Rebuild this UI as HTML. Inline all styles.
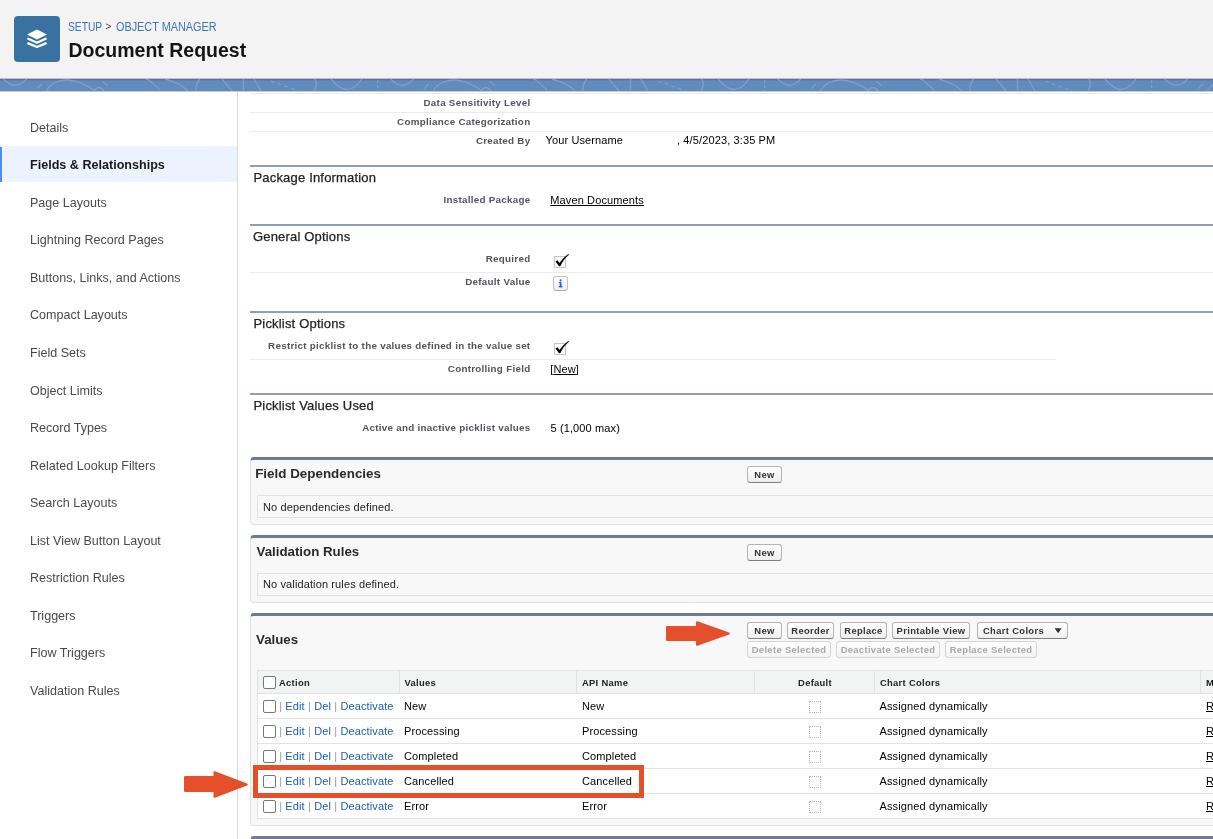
<!DOCTYPE html>
<html><head><meta charset="utf-8"><title>Document Request</title>
<style>
html,body{margin:0;padding:0;}
body{width:1213px;height:839px;overflow:hidden;position:relative;background:#fff;font-family:"Liberation Sans", sans-serif;}
.t{position:absolute;white-space:nowrap;}
</style></head><body>
<div id="root" style="position:absolute;left:0;top:0;width:1213px;height:839px;will-change:transform;">
<div style="position:absolute;left:0px;top:0px;width:1213px;height:78px;background:#f3f3f3;"></div>
<div style="position:absolute;left:0px;top:78px;width:1213px;height:1px;background:#c6c1bb;"></div>
<svg style="position:absolute;left:0;top:79px" width="1213" height="12" viewBox="0 0 1213 12">
<defs><g id="bp" fill="none" stroke="#7d9fcb" stroke-width="1.3">
<path d="M3.7,0 Q15.5,12.5 26.6,0"/><path d="M37,9.4 L42,5"/>
<path d="M46.4,12 C50,5 58,1 67,1 C76,1 84,4 95.2,12"/><path d="M94,12 Q99,5 104,12"/>
<path d="M102.6,2.6 L107.6,6.6"/><path d="M146,0 L150,1.5"/><path d="M150,2 L160,11"/>
<path d="M165,0 Q180,4 188,12"/><path d="M199.5,0 Q195,6 196,12"/><path d="M222,0 L232,12"/>
<path d="M243.5,0 L243.5,12"/><path d="M254,0 L261,12"/><path d="M271,2 L298.5,12" stroke-dasharray="4,3"/>
<path d="M315,0 Q318,6 314,12"/><path d="M331,0 Q348,21 362,0"/><path d="M377.7,1 L377.7,12" stroke-dasharray="3,2"/>
</g></defs>
<rect width="1213" height="12" fill="#5f8bbf"/>
<rect width="1213" height="1" fill="#4d77ab"/><rect y="1" width="1213" height="1" fill="#5580b5" opacity="0.6"/>
<use href="#bp" x="0"/><use href="#bp" x="387"/><use href="#bp" x="774"/><use href="#bp" x="1161"/>
</svg>
<div style="position:absolute;left:0px;top:91px;width:1213px;height:1px;background:#cdc8c2;"></div>
<svg style="position:absolute;left:14px;top:16px" width="46" height="46" viewBox="14 16 46 46">
<rect x="14" y="16" width="46" height="46" rx="4" fill="#3971a0"/>
<polygon points="27,34.5 37,29.5 47,34.5 37,39.5" fill="#fff"/>
<polyline points="28.3,38.8 37,42.7 45.7,38.8" fill="none" stroke="#fff" stroke-width="2.3" stroke-linecap="round" stroke-linejoin="round"/>
<polyline points="28.3,43.4 37,47.0 45.7,43.4" fill="none" stroke="#fff" stroke-width="2.3" stroke-linecap="round" stroke-linejoin="round"/>
</svg>
<div class="t" style="left:67.5px;top:20.84px;font-size:12px;line-height:12px;font-weight:normal;color:#3d77b4;transform:scaleX(0.855);transform-origin:0 0;">SETUP</div>
<div class="t" style="left:105.5px;top:22.04px;font-size:10px;line-height:10px;font-weight:normal;color:#3e3e3c;">&gt;</div>
<div class="t" style="left:115.8px;top:20.84px;font-size:12px;line-height:12px;font-weight:normal;color:#3d77b4;transform:scaleX(0.905);transform-origin:0 0;">OBJECT MANAGER</div>
<div class="t" style="left:68.5px;top:41.29px;font-size:19.5px;line-height:19.5px;font-weight:bold;color:#141414;">Document Request</div>
<div style="position:absolute;left:237px;top:91px;width:1px;height:748px;background:#dddbda;"></div>
<div style="position:absolute;left:0px;top:146px;width:237px;height:36px;background:#edf3fe;"></div>
<div style="position:absolute;left:0px;top:147px;width:2px;height:35px;background:#4c8ef5;"></div>
<div class="t" style="left:30px;top:120.83px;font-size:13.2px;line-height:13.2px;font-weight:normal;color:#4a4a48;transform:scaleX(0.951);transform-origin:0 0;">Details</div>
<div class="t" style="left:30px;top:158.32px;font-size:13.6px;line-height:13.6px;font-weight:bold;color:#181818;transform:scaleX(0.925);transform-origin:0 0;">Fields &amp; Relationships</div>
<div class="t" style="left:30px;top:195.89px;font-size:13.2px;line-height:13.2px;font-weight:normal;color:#4a4a48;transform:scaleX(0.951);transform-origin:0 0;">Page Layouts</div>
<div class="t" style="left:30px;top:233.42px;font-size:13.2px;line-height:13.2px;font-weight:normal;color:#4a4a48;transform:scaleX(0.951);transform-origin:0 0;">Lightning Record Pages</div>
<div class="t" style="left:30px;top:270.95px;font-size:13.2px;line-height:13.2px;font-weight:normal;color:#4a4a48;transform:scaleX(0.951);transform-origin:0 0;">Buttons, Links, and Actions</div>
<div class="t" style="left:30px;top:308.48px;font-size:13.2px;line-height:13.2px;font-weight:normal;color:#4a4a48;transform:scaleX(0.951);transform-origin:0 0;">Compact Layouts</div>
<div class="t" style="left:30px;top:346.01px;font-size:13.2px;line-height:13.2px;font-weight:normal;color:#4a4a48;transform:scaleX(0.951);transform-origin:0 0;">Field Sets</div>
<div class="t" style="left:30px;top:383.54px;font-size:13.2px;line-height:13.2px;font-weight:normal;color:#4a4a48;transform:scaleX(0.951);transform-origin:0 0;">Object Limits</div>
<div class="t" style="left:30px;top:421.07px;font-size:13.2px;line-height:13.2px;font-weight:normal;color:#4a4a48;transform:scaleX(0.951);transform-origin:0 0;">Record Types</div>
<div class="t" style="left:30px;top:458.60px;font-size:13.2px;line-height:13.2px;font-weight:normal;color:#4a4a48;transform:scaleX(0.951);transform-origin:0 0;">Related Lookup Filters</div>
<div class="t" style="left:30px;top:496.13px;font-size:13.2px;line-height:13.2px;font-weight:normal;color:#4a4a48;transform:scaleX(0.951);transform-origin:0 0;">Search Layouts</div>
<div class="t" style="left:30px;top:533.66px;font-size:13.2px;line-height:13.2px;font-weight:normal;color:#4a4a48;transform:scaleX(0.951);transform-origin:0 0;">List View Button Layout</div>
<div class="t" style="left:30px;top:571.19px;font-size:13.2px;line-height:13.2px;font-weight:normal;color:#4a4a48;transform:scaleX(0.951);transform-origin:0 0;">Restriction Rules</div>
<div class="t" style="left:30px;top:608.72px;font-size:13.2px;line-height:13.2px;font-weight:normal;color:#4a4a48;transform:scaleX(0.951);transform-origin:0 0;">Triggers</div>
<div class="t" style="left:30px;top:646.25px;font-size:13.2px;line-height:13.2px;font-weight:normal;color:#4a4a48;transform:scaleX(0.951);transform-origin:0 0;">Flow Triggers</div>
<div class="t" style="left:30px;top:683.78px;font-size:13.2px;line-height:13.2px;font-weight:normal;color:#4a4a48;transform:scaleX(0.951);transform-origin:0 0;">Validation Rules</div>
<div style="position:absolute;left:250px;top:93px;width:963px;height:1px;background:#ececec;"></div>
<div style="position:absolute;left:250px;top:112px;width:963px;height:1px;background:#ececec;"></div>
<div style="position:absolute;left:250px;top:131px;width:963px;height:1px;background:#ececec;"></div>
<div class="t" style="right:682.6px;top:98.00px;font-size:9.8px;line-height:9.8px;font-weight:bold;color:#53535f;letter-spacing:0.28px;">Data Sensitivity Level</div>
<div class="t" style="right:682.6px;top:117.00px;font-size:9.8px;line-height:9.8px;font-weight:bold;color:#53535f;letter-spacing:0.28px;">Compliance Categorization</div>
<div class="t" style="right:682.6px;top:136.00px;font-size:9.8px;line-height:9.8px;font-weight:bold;color:#53535f;letter-spacing:0.28px;">Created By</div>
<div class="t" style="left:545.5px;top:134.69px;font-size:11px;line-height:11px;font-weight:normal;color:#000;letter-spacing:0.12px;">Your Username</div>
<div class="t" style="left:677px;top:134.69px;font-size:11px;line-height:11px;font-weight:normal;color:#000;letter-spacing:0.12px;">, 4/5/2023, 3:35 PM</div>
<div style="position:absolute;left:250px;top:165px;width:963px;height:2px;background:#8e9dbe;"></div>
<div class="t" style="left:253.5px;top:171.00px;font-size:13px;line-height:13px;font-weight:normal;color:#222;letter-spacing:0.18px;-webkit-text-stroke:0.25px #222;">Package Information</div>
<div class="t" style="right:682.6px;top:195.00px;font-size:9.8px;line-height:9.8px;font-weight:bold;color:#53535f;letter-spacing:0.28px;">Installed Package</div>
<div class="t" style="left:550.3px;top:195.39px;font-size:11px;line-height:11px;font-weight:normal;color:#000;text-decoration:underline;letter-spacing:0.12px;">Maven Documents</div>
<div style="position:absolute;left:250px;top:224px;width:963px;height:2px;background:#8e9dbe;"></div>
<div class="t" style="left:253px;top:229.60px;font-size:13px;line-height:13px;font-weight:normal;color:#222;letter-spacing:0.18px;-webkit-text-stroke:0.25px #222;">General Options</div>
<div class="t" style="right:682.6px;top:254.00px;font-size:9.8px;line-height:9.8px;font-weight:bold;color:#53535f;letter-spacing:0.28px;">Required</div>
<div style="position:absolute;left:250px;top:272px;width:963px;height:1px;background:#ececec;"></div>
<div class="t" style="right:682.6px;top:277.00px;font-size:9.8px;line-height:9.8px;font-weight:bold;color:#53535f;letter-spacing:0.28px;">Default Value</div>
<div style="position:absolute;left:250px;top:311px;width:963px;height:2px;background:#8e9dbe;"></div>
<div class="t" style="left:253.5px;top:317.00px;font-size:13px;line-height:13px;font-weight:normal;color:#222;letter-spacing:0.18px;-webkit-text-stroke:0.25px #222;">Picklist Options</div>
<div class="t" style="right:682.6px;top:341.00px;font-size:9.8px;line-height:9.8px;font-weight:bold;color:#53535f;letter-spacing:0.28px;">Restrict picklist to the values defined in the value set</div>
<div style="position:absolute;left:250px;top:359px;width:806px;height:1px;background:#ececec;"></div>
<div class="t" style="right:682.6px;top:364.00px;font-size:9.8px;line-height:9.8px;font-weight:bold;color:#53535f;letter-spacing:0.28px;">Controlling Field</div>
<div class="t" style="left:550.3px;top:363.59px;font-size:11px;line-height:11px;font-weight:normal;color:#000;letter-spacing:0.12px;">[<u>New</u>]</div>
<div style="position:absolute;left:250px;top:393px;width:963px;height:2px;background:#8e9dbe;"></div>
<div class="t" style="left:253.5px;top:399.00px;font-size:13px;line-height:13px;font-weight:normal;color:#222;letter-spacing:0.18px;-webkit-text-stroke:0.25px #222;">Picklist Values Used</div>
<div class="t" style="right:682.6px;top:423.00px;font-size:9.8px;line-height:9.8px;font-weight:bold;color:#53535f;letter-spacing:0.28px;">Active and inactive picklist values</div>
<div class="t" style="left:550.5px;top:423.09px;font-size:11px;line-height:11px;font-weight:normal;color:#000;letter-spacing:0.12px;">5 (1,000 max)</div>
<svg style="position:absolute;left:554px;top:256px" width="12" height="12"><rect x="0.5" y="0.5" width="11" height="11" fill="none" stroke="#8a8a8a" stroke-width="1" stroke-dasharray="1,1"/></svg>
<svg style="position:absolute;left:0;top:0;overflow:visible" width="1" height="1">
<g transform="translate(0,0)"><path d="M555.6,261.4 L557.3,260.3 L559.5,263.0 C562,259.5 565,256.2 568.4,253.9 L569.0,254.6 C565.6,257.6 562.6,261.4 560.4,266.0 L559.0,266.2 Z" fill="#000" stroke="#000" stroke-width="0.1" stroke-linejoin="round"/></g></svg>
<svg style="position:absolute;left:554px;top:343px" width="12" height="12"><rect x="0.5" y="0.5" width="11" height="11" fill="none" stroke="#8a8a8a" stroke-width="1" stroke-dasharray="1,1"/></svg>
<svg style="position:absolute;left:0;top:0;overflow:visible" width="1" height="1">
<g transform="translate(0,87)"><path d="M555.6,261.4 L557.3,260.3 L559.5,263.0 C562,259.5 565,256.2 568.4,253.9 L569.0,254.6 C565.6,257.6 562.6,261.4 560.4,266.0 L559.0,266.2 Z" fill="#000" stroke="#000" stroke-width="0.1" stroke-linejoin="round"/></g></svg>
<div style="position:absolute;left:553px;top:276px;width:15px;height:15px;box-sizing:border-box;border:1px solid #c3c3c3;border-bottom-color:#a9a9a9;border-radius:3px;background:linear-gradient(#fff,#eceef2);"></div>
<svg style="position:absolute;left:0;top:0;overflow:visible" width="1" height="1"><g fill="#2062d8">
<circle cx="560.6" cy="280.4" r="1.05"/><rect x="559.7" y="282.1" width="1.8" height="5.2"/><rect x="558.7" y="286.1" width="3.8" height="1.2"/><rect x="558.8" y="282.1" width="1.5" height="1"/></g></svg>
<div style="position:absolute;left:250px;top:457px;width:973px;height:68px;box-sizing:border-box;background:#f8f8f8;border:1px solid #e0e3e5;border-top:3px solid #6f7a97;border-radius:4px;"></div>
<div class="t" style="left:255.2px;top:467.26px;font-size:13.4px;line-height:13.4px;font-weight:bold;color:#2a2a2a;">Field Dependencies</div>
<div style="position:absolute;left:747px;top:466px;width:35px;height:17px;box-sizing:border-box;border:1px solid #b5b5b5;border-bottom-color:#7f7f7f;border-radius:3px;background:linear-gradient(#fff,#eeeeee);"></div>
<div class="t" style="left:564.5px;width:400px;text-align:center;top:470.34px;font-size:9.4px;line-height:9.4px;font-weight:bold;color:#333;letter-spacing:0.35px;">New</div>
<div style="position:absolute;left:257px;top:495px;width:966px;height:23px;box-sizing:border-box;border:1px solid #e0e3e5;background:#f8f8f8;"></div>
<div class="t" style="left:263px;top:501.69px;font-size:11px;line-height:11px;font-weight:normal;color:#222;letter-spacing:0.12px;">No dependencies defined.</div>
<div style="position:absolute;left:250px;top:535px;width:973px;height:68px;box-sizing:border-box;background:#f8f8f8;border:1px solid #e0e3e5;border-top:3px solid #6f7a97;border-radius:4px;"></div>
<div class="t" style="left:256.5px;top:545.44px;font-size:13.3px;line-height:13.3px;font-weight:bold;color:#2a2a2a;">Validation Rules</div>
<div style="position:absolute;left:747px;top:544px;width:35px;height:17px;box-sizing:border-box;border:1px solid #b5b5b5;border-bottom-color:#7f7f7f;border-radius:3px;background:linear-gradient(#fff,#eeeeee);"></div>
<div class="t" style="left:564.5px;width:400px;text-align:center;top:548.34px;font-size:9.4px;line-height:9.4px;font-weight:bold;color:#333;letter-spacing:0.35px;">New</div>
<div style="position:absolute;left:257px;top:573px;width:966px;height:23px;box-sizing:border-box;border:1px solid #e0e3e5;background:#f8f8f8;"></div>
<div class="t" style="left:263px;top:579.49px;font-size:11px;line-height:11px;font-weight:normal;color:#222;letter-spacing:0.12px;">No validation rules defined.</div>
<div style="position:absolute;left:250px;top:613px;width:973px;height:213px;box-sizing:border-box;background:#f8f8f8;border:1px solid #e0e3e5;border-top:3px solid #6f7a97;border-radius:4px;"></div>
<div class="t" style="left:256px;top:632.74px;font-size:13.3px;line-height:13.3px;font-weight:bold;color:#2a2a2a;">Values</div>
<div style="position:absolute;left:747px;top:622px;width:35px;height:17px;box-sizing:border-box;border:1px solid #b5b5b5;border-bottom-color:#7f7f7f;border-radius:3px;background:linear-gradient(#fff,#eeeeee);"></div>
<div class="t" style="left:564.5px;width:400px;text-align:center;top:626.34px;font-size:9.4px;line-height:9.4px;font-weight:bold;color:#333;letter-spacing:0.35px;">New</div>
<div style="position:absolute;left:787px;top:622px;width:47px;height:17px;box-sizing:border-box;border:1px solid #b5b5b5;border-bottom-color:#7f7f7f;border-radius:3px;background:linear-gradient(#fff,#eeeeee);"></div>
<div class="t" style="left:610.5px;width:400px;text-align:center;top:626.34px;font-size:9.4px;line-height:9.4px;font-weight:bold;color:#333;letter-spacing:0.35px;">Reorder</div>
<div style="position:absolute;left:840px;top:622px;width:47px;height:17px;box-sizing:border-box;border:1px solid #b5b5b5;border-bottom-color:#7f7f7f;border-radius:3px;background:linear-gradient(#fff,#eeeeee);"></div>
<div class="t" style="left:663.5px;width:400px;text-align:center;top:626.34px;font-size:9.4px;line-height:9.4px;font-weight:bold;color:#333;letter-spacing:0.35px;">Replace</div>
<div style="position:absolute;left:892px;top:622px;width:78px;height:17px;box-sizing:border-box;border:1px solid #b5b5b5;border-bottom-color:#7f7f7f;border-radius:3px;background:linear-gradient(#fff,#eeeeee);"></div>
<div class="t" style="left:731.0px;width:400px;text-align:center;top:626.34px;font-size:9.4px;line-height:9.4px;font-weight:bold;color:#333;letter-spacing:0.35px;">Printable View</div>
<div style="position:absolute;left:977px;top:622px;width:91px;height:17px;box-sizing:border-box;border:1px solid #b5b5b5;border-bottom-color:#7f7f7f;border-radius:3px;background:linear-gradient(#fff,#eeeeee);"></div>
<div class="t" style="left:822.5px;width:400px;text-align:center;top:626.34px;font-size:9.4px;line-height:9.4px;font-weight:bold;color:#333;letter-spacing:0.35px;"></div>
<div class="t" style="left:983px;top:626.34px;font-size:9.4px;line-height:9.4px;font-weight:bold;color:#333;letter-spacing:0.35px;">Chart Colors</div>
<svg style="position:absolute;left:0;top:0;overflow:visible" width="1" height="1"><polygon points="1054.6,628.2 1061.6,628.2 1058.1,633.2" fill="#333"/></svg>
<div style="position:absolute;left:747px;top:641px;width:84px;height:17px;box-sizing:border-box;border:1px solid #d4d4d4;border-bottom-color:#d4d4d4;border-radius:3px;background:linear-gradient(#fdfdfd,#f4f4f4);"></div>
<div class="t" style="left:589.0px;width:400px;text-align:center;top:645.34px;font-size:9.4px;line-height:9.4px;font-weight:bold;color:#a8a8a8;letter-spacing:0.35px;">Delete Selected</div>
<div style="position:absolute;left:836px;top:641px;width:104px;height:17px;box-sizing:border-box;border:1px solid #d4d4d4;border-bottom-color:#d4d4d4;border-radius:3px;background:linear-gradient(#fdfdfd,#f4f4f4);"></div>
<div class="t" style="left:688.0px;width:400px;text-align:center;top:645.34px;font-size:9.4px;line-height:9.4px;font-weight:bold;color:#a8a8a8;letter-spacing:0.35px;">Deactivate Selected</div>
<div style="position:absolute;left:945px;top:641px;width:92px;height:17px;box-sizing:border-box;border:1px solid #d4d4d4;border-bottom-color:#d4d4d4;border-radius:3px;background:linear-gradient(#fdfdfd,#f4f4f4);"></div>
<div class="t" style="left:791.0px;width:400px;text-align:center;top:645.34px;font-size:9.4px;line-height:9.4px;font-weight:bold;color:#a8a8a8;letter-spacing:0.35px;">Replace Selected</div>
<div style="position:absolute;left:257px;top:670px;width:966px;height:149px;box-sizing:border-box;background:#fff;border:1px solid #e0e3e5;"></div>
<div style="position:absolute;left:258px;top:671px;width:965px;height:22px;background:#f2f3f3;"></div>
<div style="position:absolute;left:258px;top:693px;width:955px;height:1px;background:#e0e3e5;"></div>
<div style="position:absolute;left:399px;top:671px;width:1px;height:22px;background:#e0e3e5;"></div>
<div style="position:absolute;left:576px;top:671px;width:1px;height:22px;background:#e0e3e5;"></div>
<div style="position:absolute;left:754px;top:671px;width:1px;height:22px;background:#e0e3e5;"></div>
<div style="position:absolute;left:874px;top:671px;width:1px;height:22px;background:#e0e3e5;"></div>
<div style="position:absolute;left:1200px;top:671px;width:1px;height:22px;background:#e0e3e5;"></div>
<div style="position:absolute;left:263px;top:676px;width:13px;height:13px;box-sizing:border-box;border:1px solid #767676;border-radius:2px;background:#fff;"></div>
<div class="t" style="left:279px;top:678.44px;font-size:9.4px;line-height:9.4px;font-weight:bold;color:#222;letter-spacing:0.3px;">Action</div>
<div class="t" style="left:404.5px;top:678.44px;font-size:9.4px;line-height:9.4px;font-weight:bold;color:#222;letter-spacing:0.3px;">Values</div>
<div class="t" style="left:582px;top:678.44px;font-size:9.4px;line-height:9.4px;font-weight:bold;color:#222;letter-spacing:0.3px;">API Name</div>
<div class="t" style="left:615px;width:400px;text-align:center;top:678.44px;font-size:9.4px;line-height:9.4px;font-weight:bold;color:#222;letter-spacing:0.3px;">Default</div>
<div class="t" style="left:880px;top:678.44px;font-size:9.4px;line-height:9.4px;font-weight:bold;color:#222;letter-spacing:0.3px;">Chart Colors</div>
<div class="t" style="left:1206px;top:678.44px;font-size:9.4px;line-height:9.4px;font-weight:bold;color:#222;letter-spacing:0.3px;">M</div>
<div style="position:absolute;left:263px;top:700px;width:13px;height:13px;box-sizing:border-box;border:1px solid #767676;border-radius:2px;background:#fff;"></div>
<div class="t" style="left:279.2px;top:700.69px;font-size:11px;line-height:11px;font-weight:normal;color:#000;letter-spacing:0.12px;"><span style="color:#999">|</span> <span style="color:#1d5eab">Edit</span> <span style="color:#999">|</span> <span style="color:#1d5eab">Del</span> <span style="color:#999">|</span> <span style="color:#1d5eab">Deactivate</span></div>
<div class="t" style="left:404px;top:700.69px;font-size:11px;line-height:11px;font-weight:normal;color:#000;letter-spacing:0.12px;">New</div>
<div class="t" style="left:582px;top:700.69px;font-size:11px;line-height:11px;font-weight:normal;color:#000;letter-spacing:0.12px;">New</div>
<div style="position:absolute;left:809px;top:701px;width:12px;height:12px;box-sizing:border-box;border:1px dotted #b9b9b9;"></div>
<div class="t" style="left:879.5px;top:700.69px;font-size:11px;line-height:11px;font-weight:normal;color:#000;letter-spacing:0.12px;">Assigned dynamically</div>
<div class="t" style="left:1206px;top:700.69px;font-size:11px;line-height:11px;font-weight:normal;color:#000;text-decoration:underline;letter-spacing:0.12px;">R</div>
<div style="position:absolute;left:258px;top:718px;width:955px;height:1px;background:#e3e3e3;"></div>
<div style="position:absolute;left:263px;top:725px;width:13px;height:13px;box-sizing:border-box;border:1px solid #767676;border-radius:2px;background:#fff;"></div>
<div class="t" style="left:279.2px;top:725.69px;font-size:11px;line-height:11px;font-weight:normal;color:#000;letter-spacing:0.12px;"><span style="color:#999">|</span> <span style="color:#1d5eab">Edit</span> <span style="color:#999">|</span> <span style="color:#1d5eab">Del</span> <span style="color:#999">|</span> <span style="color:#1d5eab">Deactivate</span></div>
<div class="t" style="left:404px;top:725.69px;font-size:11px;line-height:11px;font-weight:normal;color:#000;letter-spacing:0.12px;">Processing</div>
<div class="t" style="left:582px;top:725.69px;font-size:11px;line-height:11px;font-weight:normal;color:#000;letter-spacing:0.12px;">Processing</div>
<div style="position:absolute;left:809px;top:726px;width:12px;height:12px;box-sizing:border-box;border:1px dotted #b9b9b9;"></div>
<div class="t" style="left:879.5px;top:725.69px;font-size:11px;line-height:11px;font-weight:normal;color:#000;letter-spacing:0.12px;">Assigned dynamically</div>
<div class="t" style="left:1206px;top:725.69px;font-size:11px;line-height:11px;font-weight:normal;color:#000;text-decoration:underline;letter-spacing:0.12px;">R</div>
<div style="position:absolute;left:258px;top:743px;width:955px;height:1px;background:#e3e3e3;"></div>
<div style="position:absolute;left:263px;top:750px;width:13px;height:13px;box-sizing:border-box;border:1px solid #767676;border-radius:2px;background:#fff;"></div>
<div class="t" style="left:279.2px;top:750.69px;font-size:11px;line-height:11px;font-weight:normal;color:#000;letter-spacing:0.12px;"><span style="color:#999">|</span> <span style="color:#1d5eab">Edit</span> <span style="color:#999">|</span> <span style="color:#1d5eab">Del</span> <span style="color:#999">|</span> <span style="color:#1d5eab">Deactivate</span></div>
<div class="t" style="left:404px;top:750.69px;font-size:11px;line-height:11px;font-weight:normal;color:#000;letter-spacing:0.12px;">Completed</div>
<div class="t" style="left:582px;top:750.69px;font-size:11px;line-height:11px;font-weight:normal;color:#000;letter-spacing:0.12px;">Completed</div>
<div style="position:absolute;left:809px;top:751px;width:12px;height:12px;box-sizing:border-box;border:1px dotted #b9b9b9;"></div>
<div class="t" style="left:879.5px;top:750.69px;font-size:11px;line-height:11px;font-weight:normal;color:#000;letter-spacing:0.12px;">Assigned dynamically</div>
<div class="t" style="left:1206px;top:750.69px;font-size:11px;line-height:11px;font-weight:normal;color:#000;text-decoration:underline;letter-spacing:0.12px;">R</div>
<div style="position:absolute;left:258px;top:768px;width:955px;height:1px;background:#e3e3e3;"></div>
<div style="position:absolute;left:263px;top:775px;width:13px;height:13px;box-sizing:border-box;border:1px solid #767676;border-radius:2px;background:#fff;"></div>
<div class="t" style="left:279.2px;top:775.69px;font-size:11px;line-height:11px;font-weight:normal;color:#000;letter-spacing:0.12px;"><span style="color:#999">|</span> <span style="color:#1d5eab">Edit</span> <span style="color:#999">|</span> <span style="color:#1d5eab">Del</span> <span style="color:#999">|</span> <span style="color:#1d5eab">Deactivate</span></div>
<div class="t" style="left:404px;top:775.69px;font-size:11px;line-height:11px;font-weight:normal;color:#000;letter-spacing:0.12px;">Cancelled</div>
<div class="t" style="left:582px;top:775.69px;font-size:11px;line-height:11px;font-weight:normal;color:#000;letter-spacing:0.12px;">Cancelled</div>
<div style="position:absolute;left:809px;top:776px;width:12px;height:12px;box-sizing:border-box;border:1px dotted #b9b9b9;"></div>
<div class="t" style="left:879.5px;top:775.69px;font-size:11px;line-height:11px;font-weight:normal;color:#000;letter-spacing:0.12px;">Assigned dynamically</div>
<div class="t" style="left:1206px;top:775.69px;font-size:11px;line-height:11px;font-weight:normal;color:#000;text-decoration:underline;letter-spacing:0.12px;">R</div>
<div style="position:absolute;left:258px;top:793px;width:955px;height:1px;background:#e3e3e3;"></div>
<div style="position:absolute;left:263px;top:800px;width:13px;height:13px;box-sizing:border-box;border:1px solid #767676;border-radius:2px;background:#fff;"></div>
<div class="t" style="left:279.2px;top:800.69px;font-size:11px;line-height:11px;font-weight:normal;color:#000;letter-spacing:0.12px;"><span style="color:#999">|</span> <span style="color:#1d5eab">Edit</span> <span style="color:#999">|</span> <span style="color:#1d5eab">Del</span> <span style="color:#999">|</span> <span style="color:#1d5eab">Deactivate</span></div>
<div class="t" style="left:404px;top:800.69px;font-size:11px;line-height:11px;font-weight:normal;color:#000;letter-spacing:0.12px;">Error</div>
<div class="t" style="left:582px;top:800.69px;font-size:11px;line-height:11px;font-weight:normal;color:#000;letter-spacing:0.12px;">Error</div>
<div style="position:absolute;left:809px;top:801px;width:12px;height:12px;box-sizing:border-box;border:1px dotted #b9b9b9;"></div>
<div class="t" style="left:879.5px;top:800.69px;font-size:11px;line-height:11px;font-weight:normal;color:#000;letter-spacing:0.12px;">Assigned dynamically</div>
<div class="t" style="left:1206px;top:800.69px;font-size:11px;line-height:11px;font-weight:normal;color:#000;text-decoration:underline;letter-spacing:0.12px;">R</div>
<div style="position:absolute;left:250px;top:836px;width:973px;height:10px;box-sizing:border-box;border-top:3px solid #6f7a97;border-radius:4px;background:#f8f8f8;border-left:1px solid #e0e3e5;"></div>
<div style="position:absolute;left:253px;top:765px;width:391px;height:33px;box-sizing:border-box;border:5px solid #e4502c;"></div>
<svg style="position:absolute;left:0;top:0" width="1213" height="839">
<polygon points="667,627 697,627 697,622.2 728.8,633.5 697,644.8 697,640 667,640" fill="#e4502c" stroke="#e4502c" stroke-width="2" stroke-linejoin="round"/>
<polygon points="185,777 214.5,777 214.5,772.2 246.8,784.5 214.5,796.8 214.5,791 185,791" fill="#e4502c" stroke="#e4502c" stroke-width="2" stroke-linejoin="round"/>
</svg>
</div>
</body></html>
